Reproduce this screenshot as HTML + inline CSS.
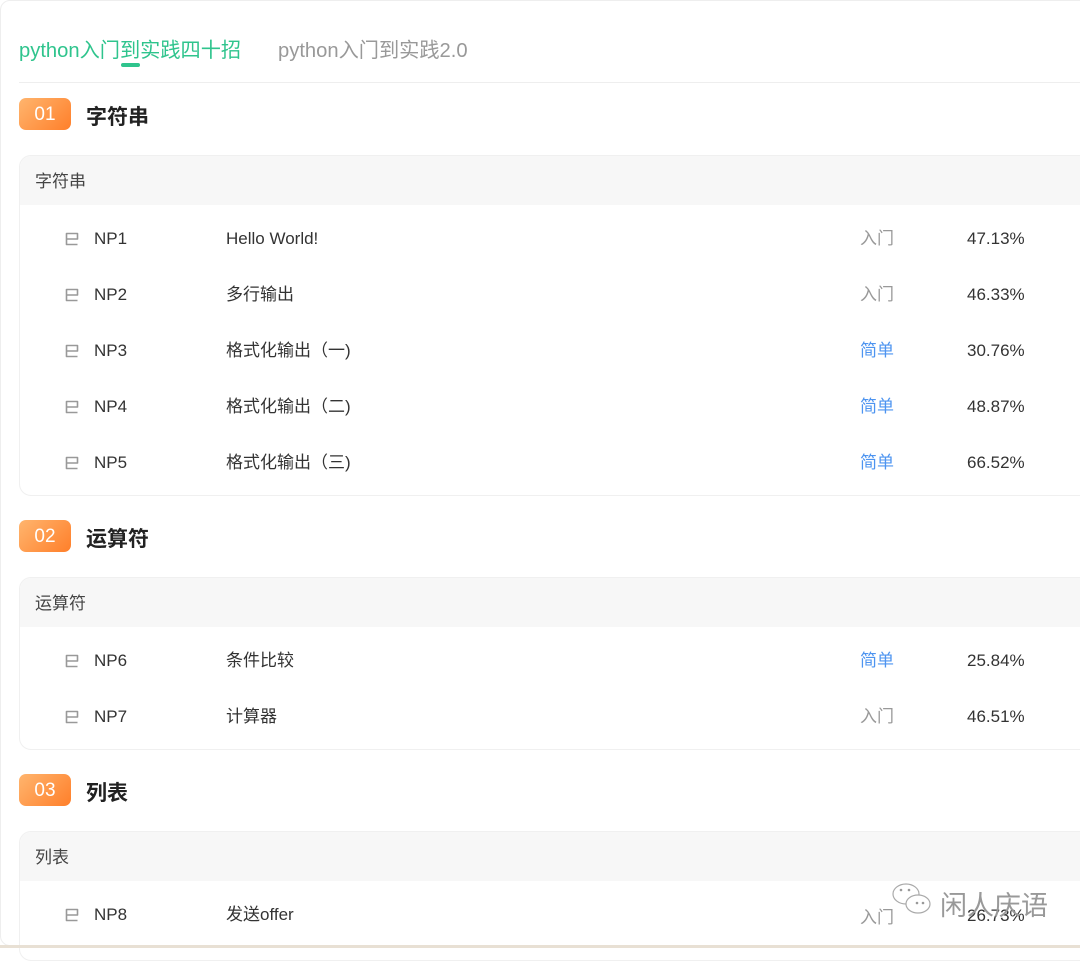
<!DOCTYPE html>
<html><head><meta charset="utf-8"><style>
*{margin:0;padding:0;box-sizing:border-box}
body{width:1080px;height:948px;overflow:hidden;background:#fff;font-family:"Liberation Sans","Noto Sans CJK SC",sans-serif;position:relative}
.frame{position:absolute;left:0;top:0;width:1090px;height:946px;border:1px solid #eee;border-radius:10px}
.tab{position:absolute;top:34px;font-size:20.2px}
.uline{position:absolute;left:121px;top:63px;width:19px;height:4px;border-radius:2px;background:#2fc48d}
.sep{position:absolute;left:19px;right:0;top:82px;height:1px;background:#eee}
.badge{position:absolute;left:19px;width:52px;height:32px;border-radius:7px;background:linear-gradient(135deg,#ffb56e,#ff7f2a);color:#fff;font-size:19px;line-height:34px;text-align:center}
.stitle{position:absolute;left:86px;font-size:21px;font-weight:bold;color:#222}
.card{position:absolute;left:19px;width:1075px;border:1px solid #f0f0f0;border-radius:12px;overflow:hidden}
.ch{height:49px;background:#f7f7f7;font-size:17px;color:#444;line-height:52px;padding-left:15px}
.row{position:relative;height:56px;font-size:17px;color:#333}
.row>*{position:absolute;top:18px;line-height:18px}
.ic{left:45px;top:20px!important}
.np{left:74px}.nm{left:206px}.lv{left:840px}.pc{left:947px}
.easy{color:#4d94f0}.intro{color:#999}
</style></head><body>
<div class="frame"></div>
<div class="tab" style="left:19px;color:#2fc48d">python入门到实践四十招</div>
<div class="tab" style="left:278px;color:#999">python入门到实践2.0</div>
<div class="uline"></div><div class="sep"></div>

<div class="badge" style="top:98px">01</div><div class="stitle" style="top:101px">字符串</div>
<div class="card" style="top:155px;height:341px"><div class="ch">字符串</div><div style="height:7px"></div>
<div class="row"><svg class="ic" width="14" height="14" viewBox="0 0 14 14"><path d="M1.5 7H12.5V1.5H1.5V12.5H12.5" fill="none" stroke="#999" stroke-width="1.6" stroke-linejoin="round"/></svg><span class="np">NP1</span><span class="nm">Hello World!</span><span class="lv intro">入门</span><span class="pc">47.13%</span></div>
<div class="row"><svg class="ic" width="14" height="14" viewBox="0 0 14 14"><path d="M1.5 7H12.5V1.5H1.5V12.5H12.5" fill="none" stroke="#999" stroke-width="1.6" stroke-linejoin="round"/></svg><span class="np">NP2</span><span class="nm">多行输出</span><span class="lv intro">入门</span><span class="pc">46.33%</span></div>
<div class="row"><svg class="ic" width="14" height="14" viewBox="0 0 14 14"><path d="M1.5 7H12.5V1.5H1.5V12.5H12.5" fill="none" stroke="#999" stroke-width="1.6" stroke-linejoin="round"/></svg><span class="np">NP3</span><span class="nm">格式化输出（一)</span><span class="lv easy">简单</span><span class="pc">30.76%</span></div>
<div class="row"><svg class="ic" width="14" height="14" viewBox="0 0 14 14"><path d="M1.5 7H12.5V1.5H1.5V12.5H12.5" fill="none" stroke="#999" stroke-width="1.6" stroke-linejoin="round"/></svg><span class="np">NP4</span><span class="nm">格式化输出（二)</span><span class="lv easy">简单</span><span class="pc">48.87%</span></div>
<div class="row"><svg class="ic" width="14" height="14" viewBox="0 0 14 14"><path d="M1.5 7H12.5V1.5H1.5V12.5H12.5" fill="none" stroke="#999" stroke-width="1.6" stroke-linejoin="round"/></svg><span class="np">NP5</span><span class="nm">格式化输出（三)</span><span class="lv easy">简单</span><span class="pc">66.52%</span></div>
</div>

<div class="badge" style="top:520px">02</div><div class="stitle" style="top:523px">运算符</div>
<div class="card" style="top:577px;height:173px"><div class="ch">运算符</div><div style="height:7px"></div>
<div class="row"><svg class="ic" width="14" height="14" viewBox="0 0 14 14"><path d="M1.5 7H12.5V1.5H1.5V12.5H12.5" fill="none" stroke="#999" stroke-width="1.6" stroke-linejoin="round"/></svg><span class="np">NP6</span><span class="nm">条件比较</span><span class="lv easy">简单</span><span class="pc">25.84%</span></div>
<div class="row"><svg class="ic" width="14" height="14" viewBox="0 0 14 14"><path d="M1.5 7H12.5V1.5H1.5V12.5H12.5" fill="none" stroke="#999" stroke-width="1.6" stroke-linejoin="round"/></svg><span class="np">NP7</span><span class="nm">计算器</span><span class="lv intro">入门</span><span class="pc">46.51%</span></div>
</div>

<div class="badge" style="top:774px">03</div><div class="stitle" style="top:777px">列表</div>
<div class="card" style="top:831px;height:130px"><div class="ch">列表</div><div style="height:7px"></div>
<div class="row"><svg class="ic" width="14" height="14" viewBox="0 0 14 14"><path d="M1.5 7H12.5V1.5H1.5V12.5H12.5" fill="none" stroke="#999" stroke-width="1.6" stroke-linejoin="round"/></svg><span class="np">NP8</span><span class="nm">发送offer</span><span class="lv intro" style="top:21px">入门</span><span class="pc" style="top:19px">26.73%</span></div>
</div>
<svg style="position:absolute;left:890px;top:880px" width="44" height="40" viewBox="0 0 44 40"><ellipse cx="16" cy="14" rx="13" ry="10" fill="#fff" stroke="#aaa" stroke-width="1.2"/><ellipse cx="28" cy="24" rx="12" ry="9" fill="#fff" stroke="#aaa" stroke-width="1.2"/><circle cx="27" cy="23" r="1.3" fill="#999"/><circle cx="33" cy="23" r="1.3" fill="#999"/><circle cx="11" cy="10" r="1.3" fill="#999"/><circle cx="19" cy="10" r="1.3" fill="#999"/></svg>
<div style="position:absolute;left:940px;top:884px;font-size:27px;color:#999">闲人庆语</div>
<div style="position:absolute;left:0;right:0;top:945px;height:3px;background:#e8e0d4"></div>
</body></html>
